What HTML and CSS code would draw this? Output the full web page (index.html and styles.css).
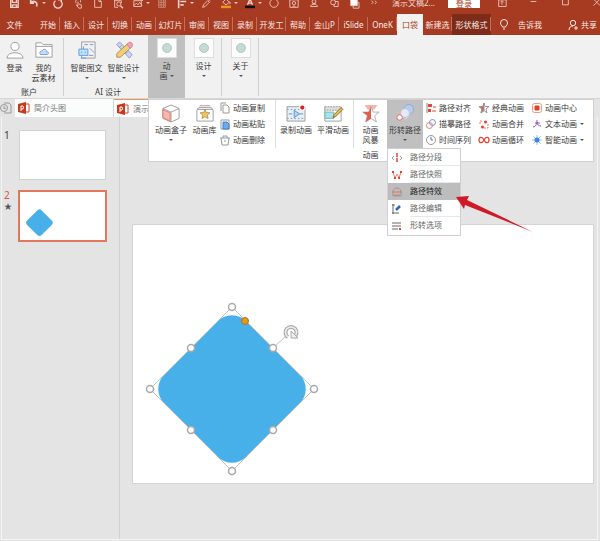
FILE: index.html
```html
<!DOCTYPE html>
<html lang="zh-CN">
<head>
  <meta charset="UTF-8">
  <title>演示文稿2</title>
  <link rel="stylesheet" href="styles.css">
</head>
<body>
<div class="app">

  <!-- Title bar -->
  <header class="titlebar">
    <div class="quick">
      <button aria-label="保存"><svg viewBox="0 0 12 12"><path d="M2 0v10h9V0M4 10V7h5v3M4 0v4h5V0" stroke-width="1.600" /></svg></button>
      <button class="more" aria-label="撤销"><svg viewBox="0 0 12 12"><path d="M2 1v4h4M2 5c3-4 9-2 7 4" stroke-width="2" /></svg></button>
      <button aria-label="重复"><svg viewBox="0 0 12 12"><path d="M9 2a5 5 0 1 1-6 0M6 1h4v3" stroke-width="1.600" /></svg></button>
      <button aria-label="触摸"><svg viewBox="0 0 12 12"><path d="M4 5a3 3 0 1 1 5-1M6 3v5l-2-1 3 4h3V7L7 6" /></svg></button>
      <button aria-label="新建"><svg viewBox="0 0 12 12"><path d="M2 0v10h8V3L7 0zM7 0v3h3" /></svg></button>
      <button aria-label="预览"><svg viewBox="0 0 12 12"><path d="M2 0v10h4M2 2h8v3" /><circle cx="7" cy="6" r="2.5" /><path d="m9 8 3 3" stroke-width="1.6" /></svg></button>
      <button class="more" aria-label="图片"><svg viewBox="0 0 12 12"><path d="M1 2h9v7H1zM1 8l3-3 2 2 2-3 3 4M9 1l3 1" /></svg></button>
      <button aria-label="表格"><svg viewBox="0 0 12 12" class="dim"><path d="M2 1h8v9H2zM2 4h8M2 7h8M5 1v9M8 1v9" /></svg></button>
      <button class="more" aria-label="对齐"><svg viewBox="0 0 12 12"><path d="M2 0v11M4 3h7M4 7h4" stroke-width="2" /></svg></button>
      <button aria-label="取色"><svg viewBox="0 0 12 12"><path d="m2 10 1-3 5-5 2 2-5 5zM9 1l2 2" /></svg></button>
      <button class="more" aria-label="填充"><svg viewBox="0 0 12 12"><path d="m2 4 4-4 4 4-4 3zM10 3c2 2 1 3 0 3" /><path d="M0 9.500h12" stroke="#f0901e" stroke-width="3" /></svg></button>
      <button class="more" aria-label="字体颜色"><svg viewBox="0 0 12 12"><path d="m3 7 3-7 3 7M4 5h4" stroke-width="1.6" /><path d="M0 9.500h12" stroke="#111" stroke-width="3" /></svg></button>
      <button aria-label="圆"><svg viewBox="0 0 12 12"><circle cx="6" cy="5" r="5" /></svg></button>
      <button aria-label="截图"><svg viewBox="0 0 12 12"><path d="M1 1h10v9H1zM4 10l2-2 2 2" /><circle cx="6" cy="5" r="2" /></svg></button>
      <button aria-label="印章"><svg viewBox="0 0 12 12"><circle cx="6" cy="3" r="2.3" /><path d="M2 9c0-4 8-4 8 0zM4 6h4" /></svg></button>
      <button aria-label="组合"><svg viewBox="0 0 12 12"><circle cx="5" cy="4" r="3" /><path d="M7 3h4v6H6V6" /></svg></button>
      <button aria-label="复制"><svg viewBox="0 0 12 12"><path d="M5 4h7v7H5z" /><path d="M2 0h8v8H2z" fill="#fff" /></svg></button>
      <button aria-label="其他"><svg viewBox="0 0 12 12"><path d="m3 2 2 2-2 2M7 2l2 2-2 2" /></svg></button>
    </div>
    <span class="doc-name">演示文稿2...</span>
    <button class="login">登录</button>
    <div class="window-buttons">
      <button aria-label="功能区"><svg viewBox="0 0 12 12"><path d="M2 1h9v8H2zM6 7V3M4 4l2-2 2 2" /></svg></button>
      <button aria-label="最小化"><svg viewBox="0 0 12 12"><path d="M3 3h7" /></svg></button>
      <button aria-label="最大化"><svg viewBox="0 0 12 12"><path d="M3 0h7v7H3z" /></svg></button>
      <button aria-label="关闭"><svg viewBox="0 0 12 12"><path d="m3 0 8 8M11 0 3 8" /></svg></button>
    </div>
  </header>

  <!-- Ribbon tabs -->
  <nav class="tabs">
    <button class="tab file">文件</button>
    <button class="tab">开始</button>
    <button class="tab">插入</button>
    <button class="tab">设计</button>
    <button class="tab">切换</button>
    <button class="tab">动画</button>
    <button class="tab wide"><span>幻灯片</span></button>
    <button class="tab">审阅</button>
    <button class="tab">视图</button>
    <button class="tab">录制</button>
    <button class="tab wide"><span>开发工</span></button>
    <button class="tab">帮助</button>
    <button class="tab wide">金山P</button>
    <button class="tab wide">iSlide</button>
    <button class="tab wide">OneK</button>
    <button class="tab active">口袋</button>
    <button class="tab wide"><span>新建选</span></button>
    <button class="tab context">形状格式</button>
    <button class="tell"><svg viewBox="0 0 10 12"><path d="M3.500 8C3 6.500 1.500 6 1.500 4a3.500 3.500 0 0 1 7 0c0 2-1.500 2.500-2 4zM4 10h2" /></svg>告诉我</button>
    <button class="share"><svg viewBox="0 0 10 12"><circle cx="5" cy="4" r="2.700" /><path d="M1 11c0-3 2-4 4-4M6 9h4M8 7v4" /></svg>共享</button>
  </nav>

  <!-- Ribbon -->
  <section class="ribbon">
    <div class="group account">
      <div class="tools">
        <button class="tool">
          <svg viewBox="0 0 20 20" class="gray"><circle cx="10" cy="6" r="4.500" fill="#fff" /><path d="M1 19c0-8 18-8 18 0z" fill="#fff" /></svg>
          登录
        </button>
        <button class="tool">
          <svg viewBox="0 0 20 20" class="gray"><path d="M1 18V2h6l2 2h10v14zM1 6h18" fill="#fff" /><path d="M6 15c-2-3 1-4 2-4 1-3 5-2 5 1 3 0 2 3 1 3z" fill="#c5dcf8" stroke="#6f9edb" /></svg>
          我的<br>云素材
        </button>
      </div>
      <span class="group-name">账户</span>
    </div>
    <div class="group design">
      <div class="tools">
        <button class="tool">
          <svg viewBox="0 0 20 20" class="gray"><path d="M4 1h15v18H4z" /><path d="M7 4h4M13 4h4M13 8l5 5M12 16h5" stroke="#8290c4" /><path d="M1 9h10v7H1zM6 9V6M3 19h6" fill="#bfe0fa" stroke="#5a9bdc" /><path d="M4 12v1M8 12v1" stroke="#2878c8" /></svg>
          智能图文<i class="caret"></i>
        </button>
        <button class="tool">
          <svg viewBox="0 0 20 20"><path d="m2 4 3-3 14 14-3 4z" fill="#cbd6ee" stroke="#8796c8" /><path d="m5 7 2-2M8 10l2-2M12 14l2-2" stroke="#7c8cc0" /><path d="M2 18v-4L14 3l4 4L6 18z" fill="#f4cf70" stroke="#a58a52" /><path d="m13 4 2-2c2-2 6 1 4 4l-2 2z" fill="#f0a0b8" stroke="#d07c98" /></svg>
          智能设计<i class="caret"></i>
        </button>
      </div>
      <span class="group-name">AI 设计</span>
    </div>
    <button class="addon pressed"><svg viewBox="0 0 20 20"><circle cx="10" cy="10" r="5" /></svg><span>动<br>画 <i class="caret inline"></i></span></button>
    <button class="addon"><svg viewBox="0 0 20 20"><circle cx="10" cy="10" r="5" /></svg>设计<i class="caret"></i></button>
    <button class="addon"><svg viewBox="0 0 20 20"><circle cx="10" cy="10" r="5" /></svg>关于<i class="caret"></i></button>
  </section>

  <main class="body">
    <div class="doc-tabs">
      <span class="history"><svg viewBox="0 0 12 12" class="gray"><path d="M4 1h5l2 2v8H4" /><circle cx="4" cy="6" r="3.500" /><path d="M4 4v3l2-1" /></svg></span>
      <button class="doc-tab"><svg viewBox="0 0 12 12"><path d="M8 2h3v8H8" fill="#fff" stroke="#d24726" /><path d="M0 2l8-2v12l-8-2z" fill="#c43a1c" /><path d="M3 9V4h2q1 1 0 3H3" fill="none" stroke="#fff" /></svg>简介头图</button>
      <button class="doc-tab current"><svg viewBox="0 0 12 12"><path d="M8 2h3v8H8" fill="#fff" stroke="#d24726" /><path d="M0 2l8-2v12l-8-2z" fill="#c43a1c" /><path d="M3 9V4h2q1 1 0 3H3" fill="none" stroke="#fff" /></svg>演示</button>
    </div>

    <div class="workspace">
      <aside class="thumbs">
        <div class="thumb">
          <span class="num">1</span>
          <div class="page"></div>
        </div>
        <div class="thumb selected">
          <div class="num">2<small>★</small></div>
          <div class="page"><svg viewBox="0 0 83 48"><rect x="9" y="20" width="20" height="20" rx="3" transform="rotate(45 19 30)" fill="#47b0e9" /></svg></div>
        </div>
      </aside>

      <div class="canvas">
        <div class="slide">
          <svg class="shape" viewBox="0 0 200 190">
            <rect x="42" y="107" width="116" height="116" rx="20" transform="translate(0 -76) rotate(45 100 165)" fill="#47b0e9" />
            <path d="M100 7l82 82-82 82-82-82zM141 48l14-13" fill="none" stroke="#c2c2c2" />
            <g fill="#fff" stroke="#a9a9a9" stroke-width="1.500">
              <circle cx="100" cy="7" r="3.500" /><circle cx="18" cy="89" r="3.500" />
              <circle cx="182" cy="89" r="3.500" /><circle cx="100" cy="171" r="3.500" />
              <circle cx="59" cy="48" r="3.500" /><circle cx="141" cy="48" r="3.500" />
              <circle cx="59" cy="130" r="3.500" /><circle cx="141" cy="130" r="3.500" />
            </g>
            <circle cx="113" cy="21" r="3.500" fill="#e9960c" stroke="#a07a35" />
            <path d="M156 37a5.500 5.500 0 1 1 6 0" fill="none" stroke="#aaa" stroke-width="4" />
            <path d="M156 37a5.500 5.500 0 1 1 6 0" fill="none" stroke="#eee" stroke-width="1.500" />
            <path d="M159 31v7h7z" fill="#eee" stroke="#aaa" />
          </svg>
        </div>
      </div>
    </div>

    <!-- Animation panel -->
    <section class="panel">
      <div class="big-tools first">
        <button class="big">
          <svg viewBox="0 0 20 20" class="gray"><path d="m10 1 9 4v11l-9 4-9-4V5zM1 5l9 4 9-4M10 9v11" /><path d="m1 6 8 4v9l-8-4z" fill="#f6b9ad" stroke="#e27562" /></svg>
          动画盒子<i class="caret"></i>
        </button>
        <button class="big narrow">
          <svg viewBox="0 0 20 20" class="gray"><path d="M3 4h14l2 3v12H1V7zM4 2h12M1 6h18" /><path d="m10 6 1.500 3.500 4 .3-3 2.600 1 3.800-3.500-2-3.500 2 1-3.800-3-2.600 4-.3z" fill="#f7c64f" stroke="#8b7650" stroke-width=".7" /></svg>
          动画库
        </button>
      </div>
      <div class="list">
        <button><svg viewBox="0 0 10 10" class="gray"><path d="M3 2h4l2 2v6H3zM1 8V0h5" /></svg>动画复制</button>
        <button><svg viewBox="0 0 10 10" class="gray"><path d="M1 1h8v9H1z" /><path d="M3 3h4l2 2v5H3z" fill="#70a9ea" stroke="#3f7fcd" /></svg>动画粘贴</button>
        <button><svg viewBox="0 0 10 10" class="gray"><path d="M0 3h10M1 3l1 7h6l1-7M3 3V1h4v2M4 6h2" /></svg>动画删除</button>
      </div>
      <div class="big-tools record">
        <button class="big">
          <svg viewBox="0 0 20 20" class="gray"><path d="M0 3h20v16H0z" fill="#e4f1fa" /><path d="M0 6h20M0 16h20" stroke-dasharray="2 2" /><path d="m8 7 6 4-6 4zM2 11h4M14 11h4" fill="#b6d4f3" stroke="#5d8cc4" /><circle cx="17" cy="4" r="3.500" fill="#fff" stroke="none" /><circle cx="17" cy="4" r="2.300" fill="#f01818" stroke="none" /></svg>
          录制动画
        </button>
        <button class="big">
          <svg viewBox="0 0 20 20" class="gray"><path d="M1 4h18v15H1z" /><path d="M1 3h18v4H1z" fill="#ddd" stroke-dasharray="2 1" /><path d="M1 9h10v7H1z" fill="#a9e2e5" stroke="#69b7bd" /><path d="m10 15 1-3 8-8 2 2-8 8z" fill="#f3bc43" stroke="#806638" /></svg>
          平滑动画
        </button>
      </div>
      <div class="storm">
        <button class="big">
          <svg viewBox="0 0 20 20"><path d="M3 1h14l-3 5H6z" fill="#f3b4ab" /><path d="m10 3 2.500 6H19l-5 4 2 7-6-4-6 4 2-7-5-4h6.500z" fill="#fff" stroke="#aaa" /><path d="M10 3v13l-6 4 2-7-5-4h6.500z" fill="#df604e" /></svg>
          <span>动画<br>风暴</span>
        </button>
        <span class="group-name">动画</span>
      </div>
      <button class="big pressed">
        <svg viewBox="0 0 20 20"><path d="m5 10 7-7 6 6-7 8z" fill="#e5e9f1" stroke="#c7cede" /><circle cx="14" cy="6" r="5.500" fill="#b9cbed" stroke="#8da8d8" /><circle cx="10" cy="10" r="5" fill="#e4e9f3" stroke="#b6c2da" /><circle cx="4" cy="15" r="3" fill="#fff" stroke="#e9624c" /></svg>
        形转路径<i class="caret"></i>
      </button>
      <div class="list three">
        <button><svg viewBox="0 0 10 10"><path d="M1 0v10" stroke="#888" /><path d="M2 1h4v3H2zM2 6h3v3H2z" fill="#e24a35" /><path d="M7 4h3M6 8h4" stroke="#e24a35" /></svg>路径对齐</button>
        <button><svg viewBox="0 0 10 10" class="gray"><path d="m5 0 1 3.500h4L7 6l1 4-3-2.500L2 10l1-4-3-2.500h4z" /><path d="M5 0v7.500L2 10l1-4-3-2.500h4z" fill="#e4553f" /></svg>经典动画</button>
        <button><svg viewBox="0 0 10 10" class="gray"><rect x=".5" y=".5" width="9" height="9" rx="2" stroke="#e99a8e" /><path d="M3 3h4v4H3z" fill="#e93d22" stroke="#e93d22" /></svg>动画中心</button>
        <button><svg viewBox="0 0 10 10" class="gray"><circle cx="6.500" cy="3.500" r="3" stroke="#7195dc" /><circle cx="3.500" cy="6.500" r="3" stroke="#e48172" /></svg>描摹路径</button>
        <button><svg viewBox="0 0 10 10" class="gray"><path d="M1 5V2h3M9 5v4H5" stroke="#e48172" stroke-dasharray="2 1" /><circle cx="6.500" cy="3" r="1.500" fill="#e93d22" stroke="none" /><circle cx="3.500" cy="8" r="1.500" fill="#e93d22" stroke="none" /></svg>动画合并</button>
        <button><svg viewBox="0 0 10 10" class="gray"><path d="M1 8C4 8 5 4 5 1M5 3c0 3 2 4 4 4M3 4h5" stroke="#8358bd" /></svg>文本动画<i class="caret inline"></i></button>
        <button><svg viewBox="0 0 10 10" class="gray"><circle cx="5" cy="5" r="4.500" /><path d="M5 2v3h2" stroke="#4a7ac0" /></svg>时间序列</button>
        <button><svg viewBox="0 0 10 10" class="gray"><path d="M5 5C3 1 0 2 0 5s3 4 5 0 5-3 5 0-3 4-5 0" stroke="#e5432c" stroke-width="1.300" /></svg>动画循环</button>
        <button><svg viewBox="0 0 10 10" class="gray"><path d="M5 0v10M0 5h10M1.500 1.500l7 7M8.500 1.500l-7 7" stroke="#9bbcec" /><circle cx="5" cy="5" r="2.500" fill="#3f83e3" stroke="none" /></svg>智能动画<i class="caret inline"></i></button>
      </div>

      <!-- Drop-down of 形转路径 -->
      <div class="menu">
        <button><svg viewBox="0 0 10 10" class="gray"><path d="M5 0v10" stroke="#e5432c" stroke-dasharray="4 1" stroke-width="1.500" /><path d="M2 3 0 5l2 2M8 3l2 2-2 2" /></svg><span>路径分段</span></button>
        <button><svg viewBox="0 0 10 10" class="gray"><path d="m1 2 2 6 2-4 2 4 2-6" stroke="#e48172" /><path d="M0 1h2v2H0zM8 1h2v2H8zM2 7h2v2H2zM6 7h2v2H6z" fill="#e5432c" stroke="none" /></svg><span>路径快照</span></button>
        <button class="hover"><svg viewBox="0 0 10 10" class="gray"><path d="M1 9V4c1-4 7-4 8 0v5z" /><path d="M0 5h10M2 8h6" stroke="#e07768" /></svg><span>路径特效</span></button>
        <button><svg viewBox="0 0 10 10" class="gray"><path d="M1 0v10M0 1h3M0 9h7" stroke="#666" /><path d="m4 6 4-4" stroke="#2f63b5" stroke-width="2.500" /></svg><span>路径编辑</span></button>
        <button><svg viewBox="0 0 10 10" class="gray"><path d="M0 2h9M0 5h9M0 8h6" stroke="#666" /><path d="M7 8h2" stroke="#e5432c" stroke-width="2" /></svg><span>形转选项</span></button>
        <svg class="pointer" viewBox="0 0 80 40"><path d="M1 2l13-1-2 4 66 32-68-27-1 4z" fill="#d01a28" /></svg>
      </div>
    </section>
  </main>
</div>
</body>
</html>
```

FILE: styles.css
```css
* {
  box-sizing: border-box;
}

body {
  margin: 0;
  font-family: "Noto Sans", "Noto Sans CJK SC", sans-serif;
  font-size: 8px;
  line-height: 10px;
  color: #3a3a3a;
  background: #e4e4e4;
}

button {
  font: inherit;
  color: inherit;
  background: none;
  border: none;
  padding: 0;
  margin: 0;
  white-space: nowrap;
}

svg {
  display: block;
  flex: none;
  overflow: visible;
}

svg.gray {
  fill: none;
  stroke: #999;
}

.app {
  min-height: 100vh;
  display: flex;
  flex-direction: column;
  overflow: hidden;
}

/* title bar */
.titlebar {
  display: flex;
  height: 14px;
  padding-left: 4px;
  background: #a63b22;
  color: #f5d9d1;
  overflow: hidden;
}

.titlebar svg {
  width: 10px;
  height: 10px;
  margin: -1px 5px 0;
  fill: none;
  stroke: #f0d0c8;
}

.titlebar svg.dim {
  stroke: #cf8f80;
}

.quick {
  display: flex;
  align-items: flex-start;
}

.quick button {
  width: 20px;
}

.quick .more {
  display: flex;
  width: 24px;
}

.quick .more::after {
  content: "";
  margin-top: 2px;
  margin-left: -2px;
  border: 2px solid transparent;
  border-top-color: #f0d0c8;
}

.doc-name {
  width: 56px;
  padding-left: 8px;
  line-height: 6px;
  white-space: nowrap;
}

.login {
  width: 32px;
  height: 8px;
  margin-left: 8px;
  line-height: 8px;
  color: #a63b22;
  background: #fff;
}

.window-buttons {
  display: flex;
  flex: 1;
  align-items: flex-start;
  justify-content: space-between;
  margin: 0 -6px 0 12px;
}

/* ribbon tabs */
.tabs {
  display: flex;
  height: 21px;
  background: #a63b22;
  color: #fbeae5;
}

.tab {
  position: relative;
  width: 24px;
  height: 21px;
}

.tab::after {
  content: "";
  position: absolute;
  right: 0;
  top: 3px;
  height: 14px;
  border-right: 1px solid #c0705d;
}

.tab.wide {
  width: 29px;
}

.tab.file {
  width: 36px;
  padding-right: 7px;
}

.tab.file::after,
.tab.active::after {
  display: none;
}

.tab.active {
  width: 26px;
  color: #a63b22;
  background: #f1f1f1;
}

.tab.context {
  width: 39px;
  background: #7c2c19;
}

.tell,
.share {
  display: flex;
  align-items: center;
  gap: 9px;
  margin-left: 8px;
}

.share {
  gap: 3px;
  margin-left: auto;
  margin-right: 3px;
}

.tabs svg {
  width: 10px;
  height: 12px;
  fill: none;
  stroke: #fbeae5;
}

/* ribbon */
.ribbon {
  display: flex;
  height: 63px;
  background: #f1f1f1;
}

.group {
  position: relative;
  display: flex;
  flex-direction: column;
  justify-content: space-between;
  padding: 5px 0 1px;
}

.account {
  width: 64px;
  padding-right: 6px;
}

.design {
  width: 84px;
  padding-left: 4px;
}

.account::after,
.addon:not(.pressed)::after {
  content: "";
  position: absolute;
  right: 0;
  top: 3px;
  bottom: 2px;
  border-right: 1px solid #d0d0d0;
}

.tools {
  display: flex;
}

.account .tool {
  width: 29px;
}

.design .tool {
  width: 37px;
}

.tool {
  align-self: flex-start;
  text-align: center;
}

.tool svg {
  width: 18px;
  height: 18px;
  margin: 1px auto 4px;
}

.group-name {
  text-align: center;
}

.addon,
.big {
  display: flex;
  flex-direction: column;
  align-items: center;
  justify-content: flex-start;
}

.addon {
  position: relative;
  width: 37px;
  height: 63px;
  padding-top: 3px;
}

.addon svg {
  width: 20px;
  height: 20px;
  margin-bottom: 3px;
  background: #fdfdfd;
  border: 1px solid #ddd;
  fill: #c5dad2;
  stroke: #a9c6bb;
}

.pressed {
  background: #c0c0c0;
}

.caret {
  display: block;
  width: 4px;
  margin: 4px auto 0;
  border: 2px solid transparent;
  border-top-color: #555;
  border-bottom: 0;
}

.caret.inline {
  display: inline-block;
  margin: 0 0 2px;
}

/* document tabs */
.body {
  position: relative;
  flex: 1;
  display: flex;
  flex-direction: column;
}

.doc-tabs {
  display: flex;
  height: 19px;
  border-top: 1px solid #d6d6d6;
}

.history {
  width: 15px;
  padding-top: 3px;
}

.doc-tabs svg {
  width: 12px;
  height: 12px;
}

.doc-tab {
  display: flex;
  align-items: center;
  gap: 4px;
  width: 99px;
  padding-left: 3px;
  color: #777;
  background: #fbfcfc;
  border-right: 1px solid #d6d6d6;
}

.doc-tab.current {
  background: #fff;
  border-top: 1px solid #e9955f;
}

/* slides */
.workspace {
  display: flex;
  flex: 1;
  margin: 0 2px 1px 1px;
  border: 1px solid #f4f4f4;
  border-top: 0;
}

.thumbs {
  width: 118px;
  padding: 13px 13px 0 0;
  border-right: 1px solid #cfcfcf;
}

.thumb {
  display: flex;
  margin-bottom: 10px;
}

.num {
  width: 16px;
  padding-left: 2px;
  font-size: 10px;
}

.num small {
  display: block;
  font-size: 8px;
  line-height: 12px;
}

.page {
  flex: 1;
  height: 50px;
  margin-left: 1px;
  background: #fff;
  border: 1px solid #d2d2d2;
}

.selected .num {
  color: #d3583c;
}

.selected small {
  color: #555;
}

.selected .page {
  height: 52px;
  margin: 0 -1px 0 0;
  border: 2px solid #e2775b;
}

.canvas {
  flex: 1;
  padding: 107px 3px 0 12px;
}

.slide {
  position: relative;
  aspect-ratio: 462 / 260;
  background: #fff;
  border: 1px solid #d4d4d4;
}

.shape {
  position: absolute;
  left: -1px;
  top: 75px;
  width: 200px;
  height: 190px;
}

/* animation panel */
.panel {
  position: absolute;
  left: 148px;
  right: 6px;
  top: 1px;
  display: flex;
  align-items: flex-start;
  height: 63px;
  background: #fff;
  border: 1px solid #d0d0d0;
}

.big-tools {
  display: flex;
}

.big-tools.first {
  padding-left: 4px;
}

.big {
  width: 36px;
  height: 48px;
  padding-top: 3px;
}

.big.narrow {
  width: 31px;
}

.big svg {
  width: 18px;
  height: 18px;
  margin: 1px 0 3px;
}

.record {
  gap: 1px;
  padding: 0 2px;
  border-left: 1px solid #ddd;
  border-right: 1px solid #ddd;
}

.storm {
  display: flex;
  flex-direction: column;
  gap: 2px;
  width: 33px;
}

.storm .big {
  width: 33px;
}

.list {
  display: grid;
  grid-auto-rows: 16px;
  width: 55px;
}

.list.three {
  grid-template-columns: 53px 53px 60px;
  width: 166px;
  padding-left: 3px;
}

.list button {
  display: flex;
  align-items: center;
  gap: 3px;
}

.list svg,
.menu button svg {
  width: 10px;
  height: 10px;
}

.list .caret {
  margin: 0;
}

/* path menu */
.menu {
  position: absolute;
  left: 238px;
  top: 48px;
  width: 74px;
  padding-bottom: 1px;
  color: #666;
  background: #fff;
  border: 1px solid #cfcfcf;
}

.menu button {
  display: flex;
  align-items: center;
  gap: 8px;
  width: 100%;
  height: 17px;
  padding-left: 4px;
}

.menu span {
  flex: 1;
  line-height: 16px;
  text-align: left;
  border-bottom: 1px solid #e8e8e8;
}

.menu .hover {
  color: #222;
  background: #bdbdbd;
}

.menu .hover span,
.menu button:nth-child(5) span {
  border-color: transparent;
}

.pointer {
  position: absolute;
  left: 67px;
  top: 46px;
  width: 80px;
  height: 40px;
}
```
